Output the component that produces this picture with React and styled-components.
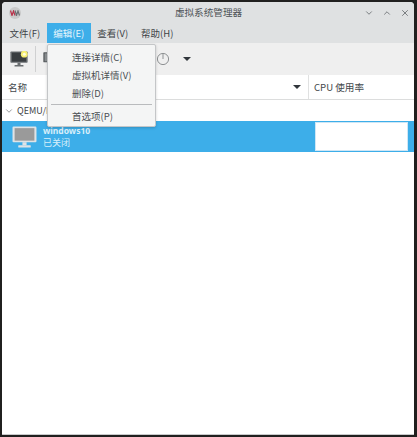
import React from 'react';
import styled, { createGlobalStyle } from 'styled-components';
import { ChevronDown, ChevronUp, X } from 'lucide-react';

const GlobalStyle = createGlobalStyle`
  html, body {
    margin: 0;
    height: 100%;
    background: #20201f;
  }
  body {
    font-family: "Noto Sans CJK SC", "Noto Sans", sans-serif;
    font-size: 10px;
    color: #31363b;
  }
  * { box-sizing: border-box; }
`;

const Desktop = styled.div`
  width: 417px;
  height: 437px;
  padding: 2px 3px 2px 2px;
`;

const Window = styled.div`
  position: relative;
  height: 100%;
  display: flex;
  flex-direction: column;
  background: #fff;
  border-radius: 4px 4px 0 0;
  border-bottom: 1px solid #c9cacb;
  overflow: hidden;
`;

const Chrome = styled.div`
  background: #dfe1e2;
`;

const TitleBar = styled.div`
  height: 21px;
  display: flex;
  align-items: center;
  padding: 0 4px 0 7px;
`;

const AppIcon = styled.div`
  width: 12px;
  height: 12px;
  border-radius: 50%;
  background: #c9c9c9;
  display: flex;
  align-items: center;
  justify-content: center;
`;

const Title = styled.div`
  flex: 1;
  text-align: center;
  font-size: 9.6px;
  line-height: 21px;
  color: #4d5256;
  padding-left: 32px;
`;

const WindowButtons = styled.div`
  display: flex;
  gap: 8px;
  color: #3f4448;
`;

const MenuBar = styled.div`
  height: 20px;
  display: flex;
  padding-left: 1px;
`;

const MenuTitle = styled.div`
  padding: 0 6.5px;
  line-height: 20px;
  font-size: 9.5px;
  color: ${(props) => (props.$active ? '#e8f5fc' : '#3e4347')};
  background: ${(props) => (props.$active ? '#3daee9' : 'transparent')};
`;

const Toolbar = styled.div`
  height: 32px;
  background: #efefef;
  display: flex;
  align-items: center;
  padding-left: 4px;
`;

const ToolButton = styled.div`
  width: ${(props) => props.$wide || 26}px;
  height: 26px;
  display: flex;
  align-items: center;
  justify-content: center;
`;

const ToolSeparator = styled.div`
  width: 1px;
  height: 26px;
  background: #cfd0d1;
  margin: 0 1px 0 3px;
`;

const Caret = styled.div`
  width: 0;
  height: 0;
  border-left: 4px solid transparent;
  border-right: 4px solid transparent;
  border-top: 4px solid #31363b;
`;

const ColumnHeader = styled.div`
  height: 25px;
  display: grid;
  grid-template-columns: 307px 1fr;
  border-bottom: 1px solid #dcdddd;
`;

const HeaderCell = styled.div`
  display: flex;
  align-items: center;
  justify-content: space-between;
  padding: 0 ${(props) => props.$right || 0}px 0 ${(props) => props.$left}px;
  border-right: ${(props) => (props.$divider ? '1px solid #e0e1e1' : 'none')};
  font-size: 9.6px;
  color: #43484c;
`;

const GroupRow = styled.div`
  height: 21px;
  display: flex;
  align-items: center;
  gap: 3px;
  padding-left: 2px;
  font-size: 9px;
  color: #3e4347;
`;

const VmRow = styled.div`
  height: 31px;
  background: #3daee9;
  display: grid;
  grid-template-columns: 313px 93px;
`;

const VmInfo = styled.div`
  display: flex;
  align-items: center;
  gap: 6px;
  padding-left: 10px;
`;

const VmText = styled.div`
  display: flex;
  flex-direction: column;
  color: #d8eefa;
`;

const VmName = styled.div`
  font-family: "Noto Sans", sans-serif;
  font-weight: 700;
  font-size: 8.5px;
  line-height: 12px;
`;

const VmState = styled.div`
  font-size: 9px;
  line-height: 12px;
`;

const CpuGraph = styled.div`
  margin: 1px 0;
  background: #fff;
  border: 1px solid #cfe6f5;
`;

const Popup = styled.div`
  position: absolute;
  left: 45px;
  top: 42px;
  width: 109px;
  height: 83px;
  padding: 3px 1px;
  background: #f4f5f5;
  border: 1px solid #c4c6c8;
  border-radius: 2px;
  box-shadow: 0 1px 3px rgba(0, 0, 0, 0.18);
`;

const PopupItem = styled.div`
  height: 18px;
  line-height: 18px;
  padding-left: 23px;
  font-size: 9.5px;
  color: #4a4f53;
`;

const PopupSeparator = styled.div`
  height: 1px;
  margin: 2px 2px 2px;
  background: #b9bbbd;
`;

const Monitor = ({ width, height, screen, frame, star }) => (
  <svg width={width} height={height} viewBox="0 0 24 21">
    <rect x="0.5" y="0.5" width="23" height="15" rx="1" fill={frame} />
    <rect x="2.5" y="2" width="19" height="12" fill={screen} />
    <rect x="10" y="15.5" width="4" height="3" fill={frame} />
    <rect x="6" y="18.5" width="12" height="2" rx="0.5" fill={frame} />
    {star && <circle cx="19" cy="4" r="4.5" fill="#f6ef72" />}
    {star && <circle cx="19" cy="4" r="2" fill="#fffde0" />}
  </svg>
);

const PlayIcon = () => (
  <svg width="14" height="14" viewBox="0 0 14 14">
    <path d="M3 2 L12 7 L3 12 Z" fill="#b5b7b8" />
  </svg>
);

const PauseIcon = () => (
  <svg width="14" height="14" viewBox="0 0 14 14">
    <rect x="3" y="2" width="3" height="10" fill="#b5b7b8" />
    <rect x="8" y="2" width="3" height="10" fill="#b5b7b8" />
  </svg>
);

const PowerIcon = () => (
  <svg width="14" height="14" viewBox="0 0 14 14" fill="none" stroke="#8e9193" strokeWidth="1">
    <circle cx="7" cy="7" r="5.6" />
    <path d="M7 1.4 V7" />
  </svg>
);

const menus = ['文件(F)', '编辑(E)', '查看(V)', '帮助(H)'];

export default function App() {
  return (
    <Desktop>
      <GlobalStyle />
      <Window>
        <Chrome>
          <TitleBar>
            <AppIcon>
              <svg width="10" height="6" viewBox="0 0 10 6" fill="none" strokeWidth="1.2">
                <path d="M0.5 0.5 L2 5.5 L3.5 1 L5 5.5" stroke="#b8324a" />
                <path d="M5 0.5 L6.5 5.5 L8 1 L9.5 5.5" stroke="#6b6f73" />
              </svg>
            </AppIcon>
            <Title>虚拟系统管理器</Title>
            <WindowButtons>
              <ChevronDown size={10} strokeWidth={1.5} />
              <ChevronUp size={10} strokeWidth={1.5} />
              <X size={10} strokeWidth={1.5} />
            </WindowButtons>
          </TitleBar>
          <MenuBar>
            {menus.map((m, i) => (
              <MenuTitle key={m} $active={i === 1}>{m}</MenuTitle>
            ))}
          </MenuBar>
        </Chrome>

        <Toolbar>
          <ToolButton>
            <Monitor width={18} height={16} frame="#6a6e71" screen="#3a3e41" star />
          </ToolButton>
          <ToolSeparator />
          <ToolButton $wide={28}>
            <Monitor width={16} height={14} frame="#55595c" screen="#8b8f92" />
          </ToolButton>
          <ToolButton $wide={39}><PlayIcon /></ToolButton>
          <ToolButton $wide={39}><PauseIcon /></ToolButton>
          <ToolButton $wide={39}><PowerIcon /></ToolButton>
          <ToolButton $wide={10}><Caret /></ToolButton>
        </Toolbar>

        <ColumnHeader>
          <HeaderCell $left={6} $right={7} $divider>
            名称
            <Caret />
          </HeaderCell>
          <HeaderCell $left={5}>CPU 使用率</HeaderCell>
        </ColumnHeader>

        <GroupRow>
          <ChevronDown size={10} strokeWidth={1.3} />
          QEMU/KVM
        </GroupRow>

        <VmRow>
          <VmInfo>
            <Monitor width={25} height={22} frame="#dfe3e6" screen="#9a9a9a" />
            <VmText>
              <VmName>windows10</VmName>
              <VmState>已关闭</VmState>
            </VmText>
          </VmInfo>
          <CpuGraph />
        </VmRow>

        <Popup>
          <PopupItem>连接详情(C)</PopupItem>
          <PopupItem>虚拟机详情(V)</PopupItem>
          <PopupItem>删除(D)</PopupItem>
          <PopupSeparator />
          <PopupItem>首选项(P)</PopupItem>
        </Popup>
      </Window>
    </Desktop>
  );
}
